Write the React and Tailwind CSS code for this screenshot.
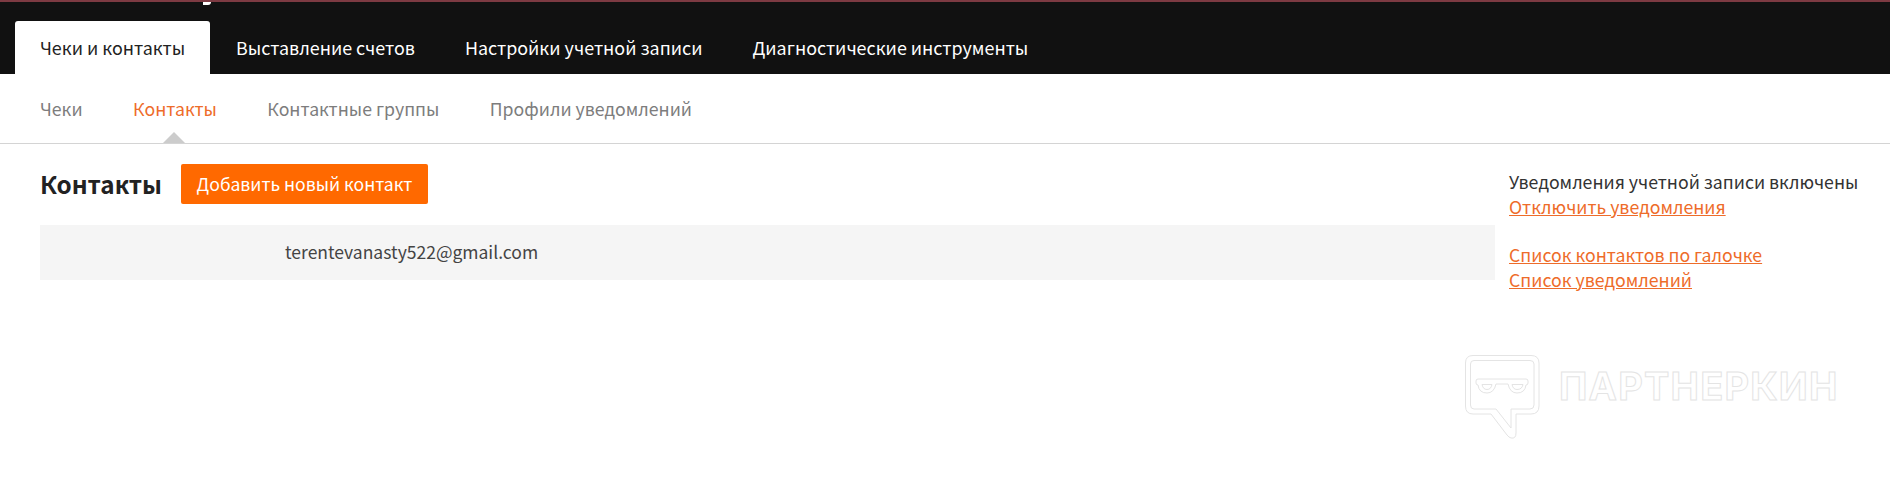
import React from "react";

const font = "font-['Noto_Sans_CJK_SC','Noto_Sans',sans-serif]";

function Watermark() {
  return (
    <div className="absolute left-[1465px] top-[355px] flex items-start">
      <svg width="75" height="85" viewBox="0 0 75 85" fill="none" stroke="#e4e4e4" strokeWidth="1">
        <path d="M8 .5H66Q74 .5 74 8V51Q74 59 66 59H51V78Q51 84 46 83Q44 82.500 42 80L26 59H8Q.5 59 .5 51V8Q.5 .5 8 .5Z" />
        <path d="M9 5.500H65Q69 5.500 69 9V50Q69 54 65 54H46V73L31 54H9Q5.500 54 5.500 50V9Q5.500 5.500 9 5.500Z" />
        <path d="M13 24H61Q63 24 63 26V28Q63 30 61 30Q60 38 52 38Q45 38 43 29H31Q29 38 22 38Q14 38 13 30Q11 30 11 28V26Q11 24 13 24Z" />
        <path d="M17 29.500H27Q26 34.500 22 34.500Q18 34.500 17 29.500ZM47 29.500H58Q57 34.500 52 34.500Q48 34.500 47 29.500Z" />
      </svg>
      <span className="ml-[19px] mt-[9px] font-['Inter',sans-serif] text-[38px] leading-[44px] font-bold tracking-[1.2px] text-transparent [-webkit-text-stroke:1px_#e4e4e4]">
        ПАРТНЕРКИН
      </span>
    </div>
  );
}

export default function App() {
  return (
    <div className={`relative h-[488px] w-[1890px] overflow-hidden bg-white ${font}`}>
      <div className="relative h-[74px] border-t-2 border-[#7d3a42] bg-[#111111]">
        <div className="absolute left-[203px] top-0 h-[3px] w-[8px] rounded-br-[4px] bg-white" />
        <div className="flex h-full items-end pl-[15px] text-[17.9px] text-white">
          <a className="flex h-[53px] w-[195px] items-center justify-center rounded-t-[3px] bg-white text-[#222222]">
            Чеки и контакты
          </a>
          <a className="flex h-[53px] items-center pl-[26px]">Выставление счетов</a>
          <a className="flex h-[53px] items-center pl-[50px]">Настройки учетной записи</a>
          <a className="flex h-[53px] items-center pl-[50px]">Диагностические инструменты</a>
        </div>
      </div>

      <div className="relative flex h-[70px] items-center gap-[50.500px] border-b-[1.5px] border-[#d4d4d4] pl-[40px] text-[17.7px] text-[#7d7d7d]">
        <a>Чеки</a>
        <a className="relative text-[#ee6c2a]">Контакты</a>
        <a>Контактные группы</a>
        <a>Профили уведомлений</a>
        <div className="absolute bottom-0 left-[163px] h-0 w-0 border-x-[11px] border-b-[11px] border-x-transparent border-b-[#cccccc]" />
      </div>

      <div className="flex">
        <div className="ml-[40px] w-[1455px]">
          <div className="mt-[20px] flex h-[40px] items-center">
            <h1 className="text-[24.3px] font-bold text-[#222222]">Контакты</h1>
            <button className="ml-[19px] h-[40px] w-[247px] rounded-[2px] bg-[#ff6900] text-[17.6px] text-white">
              Добавить новый контакт
            </button>
          </div>
          <div className="mt-[21px] flex h-[55px] items-center bg-[#f5f5f5] pl-[245px] text-[17.5px] text-[#444444]">
            terentevanasty522@gmail.com
          </div>
        </div>
        <div className="ml-[14px] mt-[25px] flex flex-col text-[17.7px] leading-[25px] text-[#333333]">
          <span>Уведомления учетной записи включены</span>
          <a className="text-[#ee6c2a] underline">Отключить уведомления</a>
          <a className="mt-[23px] text-[#ee6c2a] underline">Список контактов по галочке</a>
          <a className="text-[#ee6c2a] underline">Список уведомлений</a>
        </div>
      </div>

      <Watermark />
    </div>
  );
}
